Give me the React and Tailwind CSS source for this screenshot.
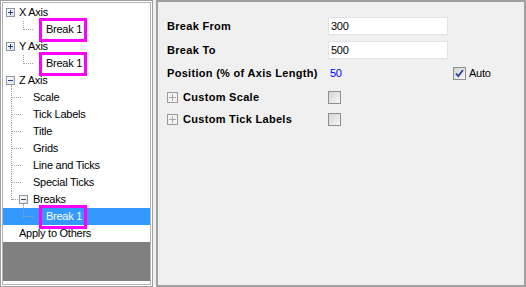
import React from "react";

const font = { fontFamily: '"Liberation Sans", Arial, sans-serif' };

function ExpandBox({ open, muted }) {
    return (
        <span className="w-[9px] h-[9px] border border-[#8c97a5] bg-linear-to-br from-white to-[#dfe3e8] flex items-center justify-center relative">
            <span className={`absolute w-[5px] h-px ${muted ? "bg-[#4a4a4a]" : "bg-[#1e3f8f]"}`} />
            {!open && <span className="absolute w-px h-[5px] bg-[#1e3f8f]" />}
        </span>
    );
}

function Marked({ children }) {
    return (
        <span className="relative h-full flex items-center">
            {children}
            <span className="absolute -top-[3px] -bottom-[4px] -left-[7px] -right-[5px] border-[3px] border-[#ff00ff]" />
        </span>
    );
}

// tree rows, x values are relative to the inner tree box (page x - 3)
function TreeRow({ children, selected, className = "" }) {
    return (
        <div className={`relative h-[17px] flex items-center ${selected ? "bg-[#3399ff] text-white" : "text-black"} ${className}`}>
            {children}
        </div>
    );
}

const vLine = "absolute w-0 border-l border-dotted border-[#a0a0a0]";
const hLine = "absolute h-0 border-t border-dotted border-[#a0a0a0]";

function AxisNode({ label, open }) {
    return (
        <TreeRow>
            <span className="ml-[3px]"><ExpandBox open={open} /></span>
            <span className="ml-[4px]">{label}</span>
            {open && <span className={`${vLine} left-[8px] top-[13px] bottom-0`} />}
        </TreeRow>
    );
}

function MarkedBreak({ selected, lineTop = 0 }) {
    return (
        <TreeRow selected={selected}>
            <span className={`${vLine} left-[20px] bottom-[8px]`} style={{ top: lineTop }} />
            <span className={`${hLine} left-[20px] w-[10px] top-[8px]`} />
            <span className="ml-[43px] h-full flex items-center">
                <Marked>Break 1</Marked>
            </span>
        </TreeRow>
    );
}

function ZChild({ label }) {
    return (
        <TreeRow>
            <span className={`${vLine} left-[8px] top-0 bottom-0`} />
            <span className={`${hLine} left-[9px] w-[9px] top-[8px]`} />
            <span className="ml-[30px]">{label}</span>
        </TreeRow>
    );
}

function CheckBox({ checked }) {
    return (
        <span className="w-[13px] h-[13px] border border-[#8e8f8f] bg-linear-to-br from-[#d4d4d4] to-[#f7f7f7] flex items-center justify-center shrink-0">
            {checked && (
                <svg width="9" height="9" viewBox="0 0 9 9">
                    <path d="M1 4.5 L3.3 7 L8 1" fill="none" stroke="#2b3f9c" strokeWidth="1.8" />
                </svg>
            )}
        </span>
    );
}

function TextBox({ value }) {
    return (
        <div className="w-[120px] h-[18px] bg-white border border-[#e2e3ea] pl-[2px] flex items-center text-black font-normal tracking-[-0.25px]">
            {value}
        </div>
    );
}

function FieldRow({ label, children, className = "" }) {
    return (
        <div className={`h-[18px] flex items-center ${className}`}>
            <div className="w-[161px] font-bold tracking-[0.3px] flex items-center">{label}</div>
            {children}
        </div>
    );
}

function Expander() {
    return (
        <span className="w-[11px] h-[11px] border border-[#9a9a9a] bg-[#f4f4f4] flex items-center justify-center relative mr-[5px]">
            <span className="absolute w-[7px] h-px bg-[#a8a8a8]" />
            <span className="absolute w-px h-[7px] bg-[#a8a8a8]" />
        </span>
    );
}

export default function App() {
    return (
        <div className="w-[526px] h-[287px] bg-[#f0f0f0] flex gap-[3px] text-[11px] leading-none" style={font}>
            {/* Tree panel */}
            <div className="w-[153px] h-full border border-[#a0a0a0] bg-white p-px">
                <div className="h-full border border-[#b5b5b5] flex flex-col tracking-[-0.25px]">
                    <div className="pt-px">
                        <AxisNode label="X Axis" />
                        <MarkedBreak />
                        <AxisNode label="Y Axis" />
                        <MarkedBreak />
                        <AxisNode label="Z Axis" open />
                        <ZChild label="Scale" />
                        <ZChild label="Tick Labels" />
                        <ZChild label="Title" />
                        <ZChild label="Grids" />
                        <ZChild label="Line and Ticks" />
                        <ZChild label="Special Ticks" />
                        <TreeRow>
                            <span className={`${vLine} left-[8px] top-0 bottom-[8px]`} />
                            <span className={`${hLine} left-[9px] w-[8px] top-[8px]`} />
                            <span className="ml-[16px]"><ExpandBox open muted /></span>
                            <span className="ml-[5px]">Breaks</span>
                            <span className={`${vLine} left-[20px] top-[13px] bottom-0`} />
                        </TreeRow>
                        <MarkedBreak selected />
                        <TreeRow>
                            <span className="ml-[16px]">Apply to Others</span>
                        </TreeRow>
                    </div>
                    <div className="flex-1 bg-[#808080] mb-[3px]" />
                </div>
            </div>

            {/* Settings panel */}
            <div className="flex-1 h-full border-2 border-[#a0a0a0] bg-[#f0f0f0] pl-[9px] pt-[15px] text-black">
                <FieldRow label="Break From">
                    <TextBox value="300" />
                </FieldRow>
                <FieldRow label="Break To" className="mt-[6px]">
                    <TextBox value="500" />
                </FieldRow>
                <FieldRow label="Position (% of Axis Length)" className="mt-[5px]">
                    <span className="w-[125px] pl-[2px] text-[#0000ff] tracking-[-0.25px]">50</span>
                    <CheckBox checked />
                    <span className="ml-[3px] tracking-[-0.25px]">Auto</span>
                </FieldRow>
                <FieldRow label={<><Expander />Custom Scale</>} className="mt-[6px]">
                    <CheckBox />
                </FieldRow>
                <FieldRow label={<><Expander />Custom Tick Labels</>} className="mt-[4px]">
                    <CheckBox />
                </FieldRow>
            </div>
        </div>
    );
}
